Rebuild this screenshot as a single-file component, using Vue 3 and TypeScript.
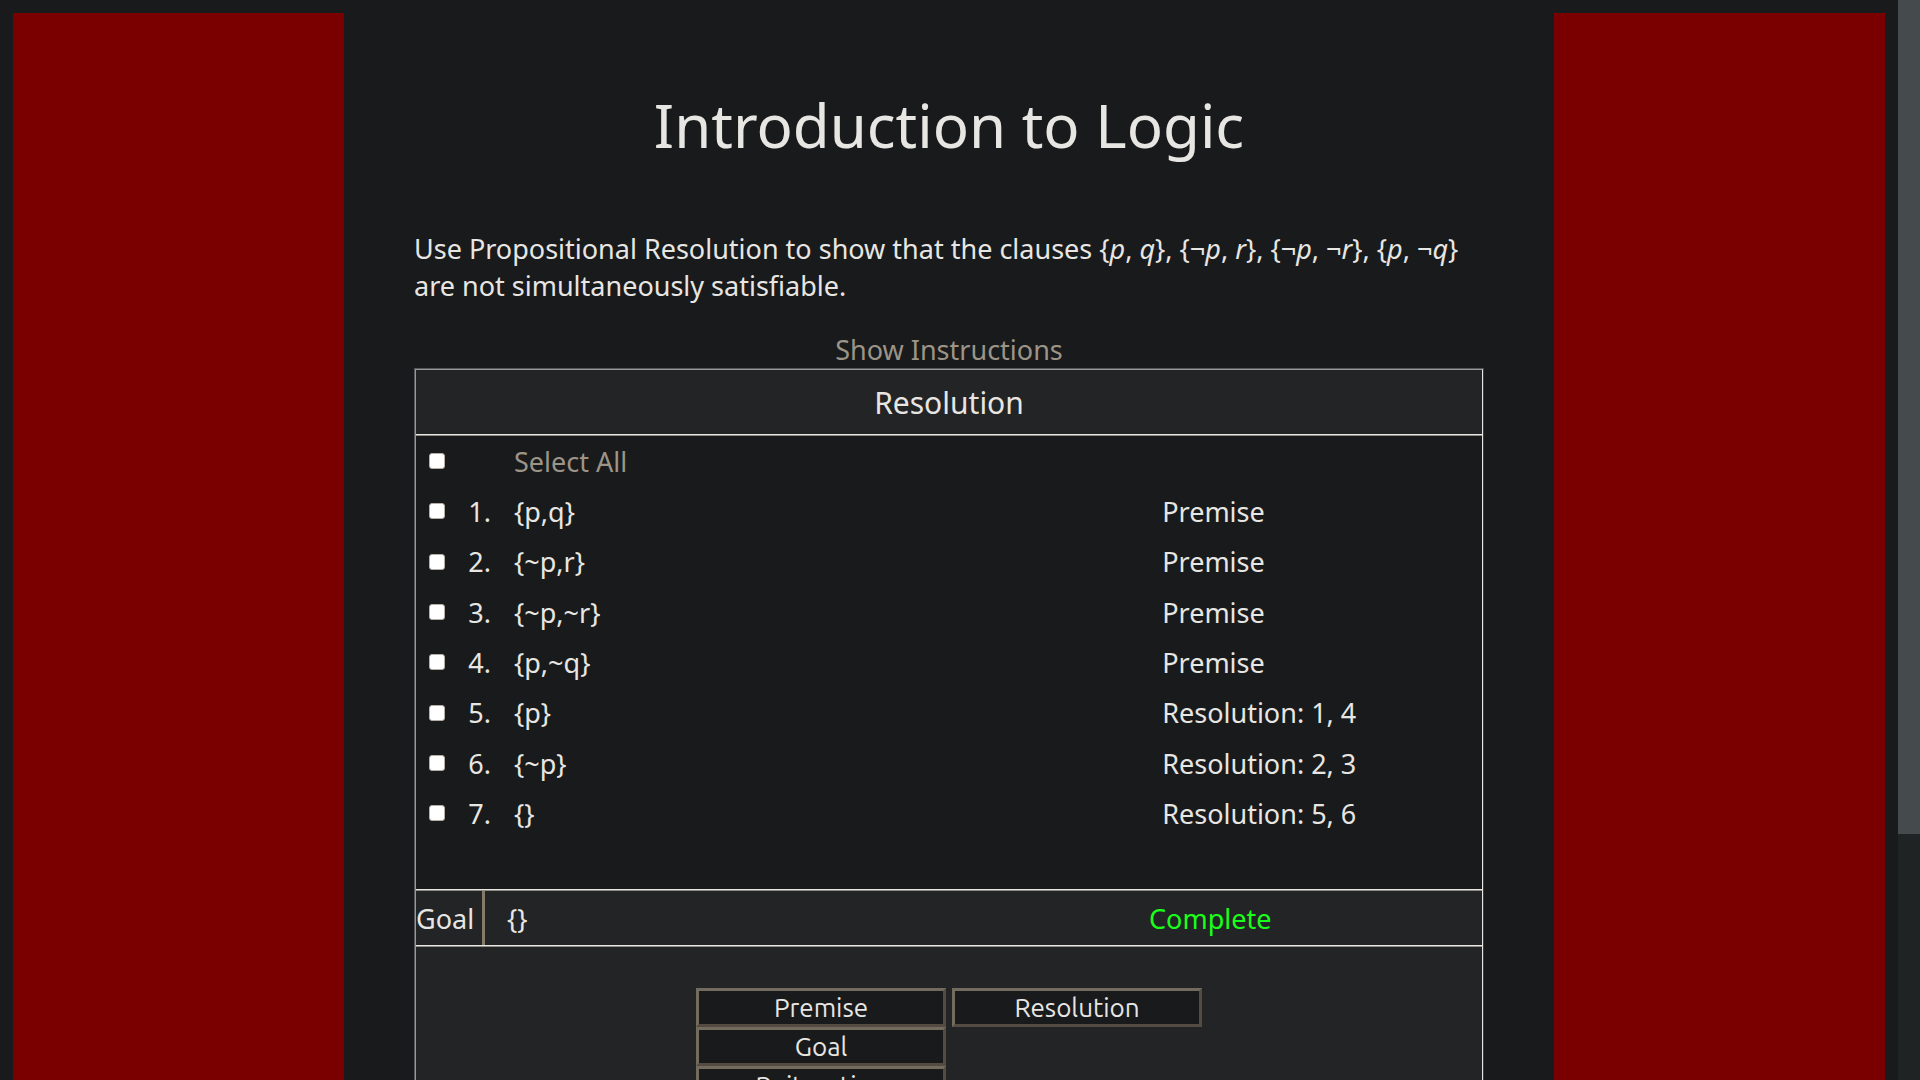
<script setup lang="ts">
import { computed, ref } from 'vue'

interface ProofLine {
  id: number
  clause: string
  reason: string
}

const lines: ProofLine[] = [
  { id: 1, clause: '{p,q}', reason: 'Premise' },
  { id: 2, clause: '{~p,r}', reason: 'Premise' },
  { id: 3, clause: '{~p,~r}', reason: 'Premise' },
  { id: 4, clause: '{p,~q}', reason: 'Premise' },
  { id: 5, clause: '{p}', reason: 'Resolution: 1, 4' },
  { id: 6, clause: '{~p}', reason: 'Resolution: 2, 3' },
  { id: 7, clause: '{}', reason: 'Resolution: 5, 6' },
]

const selected = ref<number[]>([])
const allSelected = computed({
  get: () => selected.value.length === lines.length,
  set: (on: boolean) => {
    selected.value = on ? lines.map((line) => line.id) : []
  },
})
</script>

<template>
  <div class="window">
    <div class="page">
      <div class="side"></div>
      <main class="content">
        <h1>Introduction to Logic</h1>
        <p class="task">
          Use Propositional Resolution to show that the clauses {<i>p</i>, <i>q</i>}, {¬<i>p</i>, <i>r</i>}, {¬<i>p</i>, ¬<i>r</i>}, {<i>p</i>, ¬<i>q</i>} are not simultaneously satisfiable.
        </p>
        <a class="instructions" href="#instructions">Show Instructions</a>

        <section class="panel">
          <div class="panel-body">
            <h2>Resolution</h2>
            <table class="proof">
              <tbody>
                <tr>
                  <td class="check"><input id="select-all" v-model="allSelected" type="checkbox" /></td>
                  <td class="number"></td>
                  <td class="clause"><label class="muted" for="select-all">Select All</label></td>
                  <td class="reason"></td>
                </tr>
                <tr v-for="line in lines" :key="line.id">
                  <td class="check">
                    <input :id="`line-${line.id}`" v-model="selected" type="checkbox" :value="line.id" />
                  </td>
                  <td class="number"><label :for="`line-${line.id}`">{{ line.id }}.</label></td>
                  <td class="clause">{{ line.clause }}</td>
                  <td class="reason">{{ line.reason }}</td>
                </tr>
                <tr>
                  <td colspan="4"></td>
                </tr>
              </tbody>
            </table>

            <div class="goal">
              <div class="goal-name">Goal</div>
              <div class="goal-clause">{}</div>
              <div class="goal-status">Complete</div>
            </div>

            <div class="actions">
              <div class="column">
                <button type="button">Premise</button>
                <button type="button">Goal</button>
                <button type="button">Reiteration</button>
              </div>
              <div class="column">
                <button type="button">Resolution</button>
              </div>
            </div>
          </div>
        </section>
      </main>
      <div class="side"></div>
    </div>
    <div class="scrollbar"><div class="thumb"></div></div>
  </div>
</template>

<style>
body {
  margin: 0;
  background: #181a1b;
}
</style>

<style scoped>
* {
  box-sizing: border-box;
}

.window {
  display: flex;
  height: 100vh;
  overflow: hidden;
  background: #181a1b;
  color: #e8e6e3;
  font: 27px/37px "Noto Sans", sans-serif;
}

.page {
  flex: 1;
  min-width: 0;
  display: grid;
  grid-template-columns: 331fr 1210fr 331fr;
  padding: 13px 13px 0;
}

.side {
  background: #7a0000;
}

.content {
  min-width: 0;
  padding: 71px 70px 0;
}

h1 {
  margin: 0 0 64px;
  font-size: 60px;
  line-height: 82px;
  font-weight: 400;
  text-align: center;
}

.task {
  margin: 0 0 27px;
}

.instructions {
  display: block;
  color: #9d9488;
  text-align: center;
  text-decoration: none;
}

/* Two nested one-pixel frames give the panel its grooved edge. */
.panel {
  border: 1px solid #54585a;
  border-right-color: #3a3e40;
  border-bottom: 0;
}

.panel-body {
  border: 1px solid #999;
  border-right-color: #e8e6e3;
  border-bottom: 0;
  background: #222426;
}

h2 {
  margin: 0;
  padding-top: 1px;
  border-bottom: 1px solid #e8e6e3;
  font-size: 30px;
  line-height: 63px;
  font-weight: 400;
  text-align: center;
}

.proof {
  width: 100%;
  height: 455px;
  table-layout: fixed;
  border-collapse: separate;
  border-spacing: 0;
  border-top: 1px solid #8f8b85;
  border-bottom: 1px solid #e8e6e3;
  background: #181a1b;
}

.proof td {
  height: 50px;
  padding: 0;
  vertical-align: middle;
}

.proof .check {
  width: 44px;
  padding-left: 13px;
  line-height: 0;
}

.proof .number {
  width: 54px;
  padding-right: 23px;
  text-align: right;
}

.proof .reason {
  width: 30%;
}

.muted {
  color: #9d9488;
}

input[type='checkbox'] {
  appearance: none;
  width: 16px;
  height: 16px;
  margin: 0;
  border: 1px solid #b5aea4;
  border-radius: 3px;
  background: #fff;
}

input[type='checkbox']:checked {
  background: #8c8273;
}

.goal {
  display: flex;
  height: 56px;
  line-height: 55px;
  border-top: 1px solid #8f8b85;
  border-bottom: 1px solid #e8e6e3;
}

.goal-name {
  width: 69px;
  border-right: 3px solid #857968;
}

.goal-clause {
  flex: 1;
  padding-left: 22px;
}

.goal-status {
  width: 333px;
  color: #1aff1a;
}

.actions {
  display: flex;
  justify-content: center;
  gap: 6px;
  padding-top: 41px;
  border-top: 1px solid #8f8b85;
}

.column {
  display: flex;
  flex-direction: column;
  width: 250px;
}

button {
  height: 39px;
  padding: 0;
  border: 3px solid;
  border-color: #736b5e #544c43 #544c43 #736b5e;
  background: #181a1b;
  color: inherit;
  font: 26px/33px Ubuntu, "Noto Sans", sans-serif;
}

.scrollbar {
  width: 22px;
  background: #202324;
}

.thumb {
  height: 77.2%;
  background: #454a4d;
}
</style>
